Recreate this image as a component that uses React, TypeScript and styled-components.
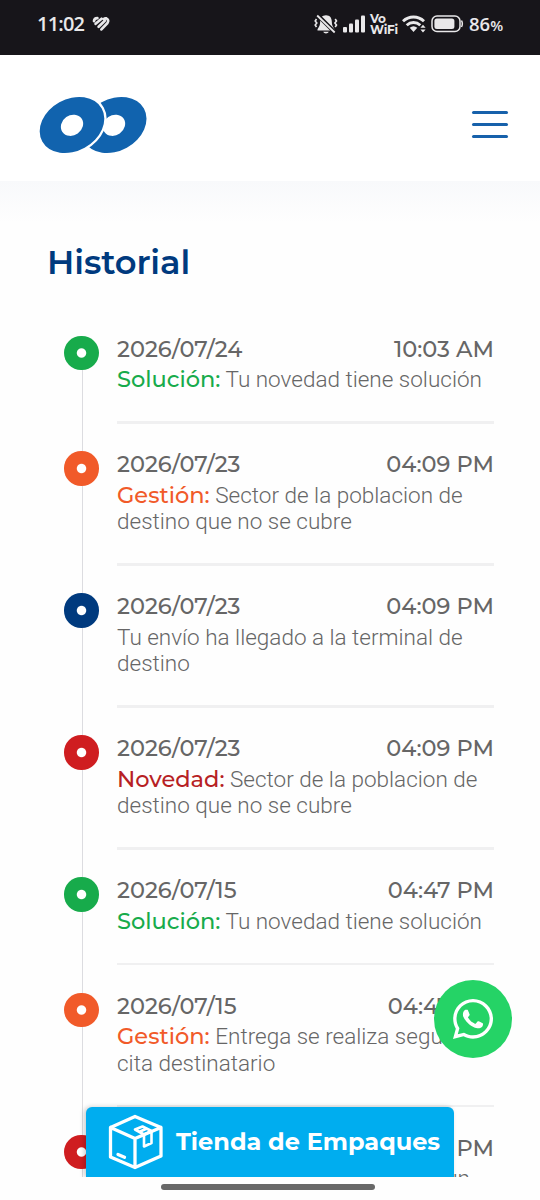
import React from "react";
import styled, { createGlobalStyle } from "styled-components";

const GlobalStyle = createGlobalStyle`
  *, *::before, *::after { box-sizing: border-box; }
  body { margin: 0; background: #fff; }
`;

const heading = `"Montserrat", "Inter", sans-serif`;
const bodyFont = `"Roboto", sans-serif`;
const systemFont = `"Open Sans", sans-serif`;

const Screen = styled.div`
  position: relative;
  width: 540px;
  height: 1200px;
  overflow: hidden;
  display: flex;
  flex-direction: column;
  background: #fefefe;
`;

const StatusBar = styled.div`
  flex: none;
  height: 55px;
  padding: 0 36px 7px 37px;
  display: flex;
  align-items: center;
  justify-content: space-between;
  background: #17151a;
  color: #e9e8ea;
  font-family: ${systemFont};
`;

const StatusGroup = styled.div<{ $gap: number }>`
  display: flex;
  align-items: center;
  gap: ${(p) => p.$gap}px;
`;

const Clock = styled.span`
  width: 49px;
  font-size: 20px;
  font-weight: 600;
  line-height: 24px;
  letter-spacing: -0.8px;
  white-space: nowrap;
`;

const VoWifi = styled.span`
  display: flex;
  flex-direction: column;
  width: 27px;
  font-family: ${heading};
  font-size: 12px;
  font-weight: 700;
  line-height: 11px;
  letter-spacing: -0.2px;
`;

const Percent = styled.span`
  width: 35px;
  font-size: 18.5px;
  font-weight: 600;
  line-height: 24px;
  white-space: nowrap;
  small { font-size: 15px; }
`;

const Header = styled.header`
  flex: none;
  height: 126px;
  padding: 13px 32px 0 38px;
  display: flex;
  align-items: center;
  justify-content: space-between;
  background: #fff;
`;

const MenuButton = styled.button`
  display: flex;
  flex-direction: column;
  gap: 9px;
  width: 36px;
  padding: 0;
  margin-bottom: 1px;
  border: 0;
  background: none;
`;

const MenuBar = styled.span`
  height: 3px;
  border-radius: 2px;
  background: #1761ab;
`;

const Main = styled.main`
  flex: none;
  height: 996px;
  overflow: hidden;
  padding: 57px 46px 0 47px;
  background: linear-gradient(#f8f9fb 0, #fefefe 42px);
`;

const Title = styled.h1`
  margin: 0;
  height: 48px;
  font: 600 33.75px/48px ${heading};
  letter-spacing: -0.1px;
  color: #003a7e;
`;

const Timeline = styled.ol`
  list-style: none;
  margin: 49.8px 0 0;
  padding: 0 0 0 17px;
`;

const Entry = styled.li`
  display: grid;
  grid-template-columns: 35px 1fr;
  column-gap: 18px;
`;

const Rail = styled.div`
  display: flex;
  flex-direction: column;
  align-items: center;
`;

const Marker = styled.span<{ $color: string }>`
  flex: none;
  width: 34.4px;
  height: 34.4px;
  border-radius: 50%;
  background: radial-gradient(circle, #fff 4.2px, ${(p) => p.$color} 5.2px);
`;

const Line = styled.span`
  flex: 1;
  width: 1px;
  margin-left: 1px;
  background: #dcdce0;
`;

const Content = styled.div`
  padding-bottom: 27.5px;
`;

const Stamp = styled.div`
  display: flex;
  justify-content: space-between;
  height: 30.5px;
  font: 500 22.5px/27px ${heading};
  color: #666;
`;

const Description = styled.p`
  margin: 0;
  font: 300 22.5px/26.5px ${bodyFont};
  color: #666;
  white-space: nowrap;
`;

const Label = styled.strong<{ $color: string }>`
  font: 500 22.5px/0 ${heading};
  color: ${(p) => p.$color};
`;

const Divider = styled.hr`
  height: 2.5px;
  margin: 28.5px 0 0;
  border: 0;
  background: #f0f0f1;
`;

const GestureBar = styled.div`
  flex: none;
  height: 23px;
  padding: 7px 4px 0 0;
  display: flex;
  justify-content: center;
  background: #fefefe;
`;

const GesturePill = styled.span`
  width: 214px;
  height: 5.5px;
  border-radius: 3px;
  background: #686868;
`;

const ChatButton = styled.button`
  position: absolute;
  left: 434px;
  top: 980px;
  width: 78px;
  height: 78px;
  padding: 0;
  border: 0;
  border-radius: 50%;
  display: grid;
  place-items: center;
  background: #25d366;
`;

const StoreButton = styled.button`
  position: absolute;
  left: 86px;
  top: 1107px;
  width: 367.5px;
  height: 70px;
  padding: 0 0 0 22px;
  border: 0;
  border-radius: 6px 6px 0 0;
  display: flex;
  align-items: center;
  gap: 12px;
  background: #00adef;
  box-shadow: -2px 0 5px rgba(0, 0, 0, 0.2);
  clip-path: inset(-8px -8px 0 -8px);
  color: #fff;
  font: 700 24px/28px ${heading};
  white-space: nowrap;
`;

const colors = {
  green: "#17ab4b",
  orange: "#f15a29",
  blue: "#003a7e",
  red: "#cf1d20",
};

type Item = { day: string; hour: string; color: string; label?: string; labelColor?: string; lines: string[] };

const items: Item[] = [
  { day: "2026/07/24", hour: "10:03 AM", color: colors.green, label: "Solución:", lines: ["Tu novedad tiene solución"] },
  { day: "2026/07/23", hour: "04:09 PM", color: colors.orange, label: "Gestión:", lines: ["Sector de la poblacion de", "destino que no se cubre"] },
  { day: "2026/07/23", hour: "04:09 PM", color: colors.blue, lines: ["Tu envío ha llegado a la terminal de", "destino"] },
  { day: "2026/07/23", hour: "04:09 PM", color: colors.red, label: "Novedad:", labelColor: "#b71f24", lines: ["Sector de la poblacion de", "destino que no se cubre"] },
  { day: "2026/07/15", hour: "04:47 PM", color: colors.green, label: "Solución:", lines: ["Tu novedad tiene solución"] },
  { day: "2026/07/15", hour: "04:47 PM", color: colors.orange, label: "Gestión:", lines: ["Entrega se realiza segun", "cita destinatario"] },
  { day: "2026/07/15", hour: "04:47 PM", color: colors.red, label: "Novedad:", labelColor: "#b71f24", lines: ["Entrega se realiza segun"] },
];

const HeartIcon = () => (
  <svg width="18" height="16" viewBox="0 0 18 16" fill="none" stroke="#e9e8ea" strokeWidth="2.700" strokeLinecap="round">
    <path d="M2 5.200Q2.200 2.200 5.400 2.200M3.600 7.800 9.600 2.800M6.600 10.800l6.200-6M9.400 13.400l6-6.300q2-3.200-1.100-4.700-1.400-.3-2.600.6" />
  </svg>
);

const MuteIcon = () => (
  <svg width="24" height="21" viewBox="0 0 24 21" fill="#e9e8ea">
    <path d="M12 1.2c4 0 5.800 2.800 5.800 6.400 0 4 1.200 5.400 2.700 7.600v1.300h-17v-1.300c1.500-2.200 2.700-3.600 2.700-7.600 0-3.600 1.800-6.400 5.800-6.400zM9.300 17.800h5.400c-.6 2.200-4.800 2.200-5.400 0z" />
    <path d="M3.500 1 21 18.500" stroke="#17151a" strokeWidth="4" />
    <path d="M3.200 1.500 20.700 18.500" stroke="#e9e8ea" strokeWidth="1.800" />
    <path d="m2.500 5-1.300 2 1.600 2-1.600 2 1.300 2M21.200 5l1.300 2-1.600 2 1.600 2-1.300 2" fill="none" stroke="#e9e8ea" strokeWidth="1.600" />
  </svg>
);

const SignalIcon = () => (
  <svg width="22" height="18" viewBox="0 0 22 18" fill="#e9e8ea">
    <rect x="0" y="12" width="4" height="5.500" rx="1" />
    <rect x="6" y="8.500" width="4" height="9" rx="1" />
    <rect x="12" y="4.500" width="4" height="13" rx="1" />
    <rect x="18" y="0.500" width="4" height="17" rx="1" />
  </svg>
);

const WifiIcon = () => (
  <svg width="24" height="18" viewBox="0 0 24 18" fill="none" stroke="#e9e8ea" strokeWidth="2.900">
    <path d="M1 6.200C7 .6 16 .6 22 6.200M4.700 10.200c4-3.700 9.600-3.700 13.600 0" />
    <path d="M7.700 12.700q3.800-3 7.600 0L11.500 17z" fill="#e9e8ea" stroke="none" />
    <path d="m21 9.800 2.600 3h-5.200zM21 17.600l2.600-3h-5.200z" fill="#e9e8ea" stroke="none" />
  </svg>
);

const BatteryIcon = () => (
  <svg width="33" height="18" viewBox="0 0 33 18">
    <rect x="1" y="1" width="28" height="15.500" rx="5" fill="none" stroke="#e9e8ea" strokeWidth="1.500" />
    <rect x="3.400" y="3.400" width="20" height="10.700" rx="2.500" fill="#e9e8ea" />
    <path d="M30.500 5.500q1.700 3.200 0 6.500" stroke="#e9e8ea" strokeWidth="1.500" fill="none" />
  </svg>
);

const Logo = () => (
  <svg width="110" height="60" viewBox="38 95 110 60">
    <g fill="#1163ae">
      <ellipse cx="114.200" cy="125" rx="34" ry="26" transform="rotate(-29 114.200 125)" />
      <ellipse cx="114" cy="125.300" rx="11.700" ry="10" fill="#fff" transform="rotate(-35 114 125.300)" />
      <ellipse cx="72" cy="125" rx="34" ry="26" transform="rotate(-29 72 125)" stroke="#fff" strokeWidth="4.600" paintOrder="stroke" />
      <ellipse cx="72" cy="125.300" rx="11.700" ry="10" fill="#fff" transform="rotate(-35 72 125.300)" />
    </g>
  </svg>
);

const WhatsAppIcon = () => (
  <svg width="40" height="40" viewBox="0 32 448 448" fill="#fff">
    <path d="M380.900 97.100C339 55.100 283.200 32 223.900 32c-122.400 0-222 99.600-222 222 0 39.100 10.200 77.300 29.600 111L0 480l117.700-30.900c32.400 17.700 68.900 27 106.100 27h.1c122.300 0 224.100-99.600 224.100-222 0-59.300-25.200-115-67.100-157zm-157 341.600c-33.200 0-65.700-8.900-94-25.700l-6.700-4-69.800 18.300L72 359.200l-4.400-7c-18.500-29.400-28.200-63.300-28.200-98.200 0-101.700 82.800-184.500 184.600-184.500 49.300 0 95.600 19.200 130.400 54.100 34.800 34.900 56.200 81.200 56.100 130.500 0 101.800-84.900 184.600-186.600 184.600zm101.200-138.200c-5.500-2.800-32.800-16.200-37.900-18-5.100-1.900-8.800-2.800-12.500 2.800-3.700 5.600-14.300 18-17.600 21.800-3.200 3.700-6.500 4.200-12 1.400-32.600-16.300-54-29.100-75.500-66-5.700-9.800 5.700-9.100 16.300-30.300 1.800-3.700.9-6.900-.5-9.700-1.400-2.800-12.500-30.100-17.100-41.200-4.500-10.800-9.100-9.300-12.500-9.500-3.200-.2-6.900-.2-10.600-.2-3.700 0-9.700 1.400-14.800 6.900-5.100 5.600-19.400 19-19.400 46.300 0 27.300 19.900 53.700 22.600 57.400 2.800 3.700 39.100 59.700 94.800 83.800 35.200 15.200 49 16.500 66.600 13.900 10.700-1.600 32.800-13.400 37.400-26.400 4.600-13 4.600-24.100 3.200-26.400-1.300-2.500-5-3.900-10.500-6.600z" />
  </svg>
);

const BoxIcon = () => (
  <svg width="56" height="56" viewBox="0 0 56 56" fill="none" stroke="#fff" strokeWidth="3.300" strokeLinejoin="round" strokeLinecap="round">
    <path d="M27 2.500 53 13.500V42L27 53.500 2.500 43V13.500zM2.500 13.500 27 24.500 53 13.500M27 24.500V53.500" />
    <path d="M27 15.500 34.500 12.500 43.500 17V29L36 32.500V20.500zM36 20.500 43.500 17M31.500 17.800 39 14.500" strokeWidth="2.600" />
    <path d="m10 40.500 6.500 2.800" />
  </svg>
);

export default function App() {
  return (
    <>
      <GlobalStyle />
      <Screen>
        <StatusBar>
          <StatusGroup $gap={6}>
            <Clock>11:02</Clock>
            <HeartIcon />
          </StatusGroup>
          <StatusGroup $gap={5}>
            <MuteIcon />
            <SignalIcon />
            <VoWifi>
              <span>Vo</span>
              <span>WiFi</span>
            </VoWifi>
            <WifiIcon />
            <BatteryIcon />
            <Percent>86<small>%</small></Percent>
          </StatusGroup>
        </StatusBar>
        <Header>
          <Logo />
          <MenuButton aria-label="Menú">
            <MenuBar />
            <MenuBar />
            <MenuBar />
          </MenuButton>
        </Header>
        <Main>
          <Title>Historial</Title>
          <Timeline>
            {items.map((item, i) => (
              <Entry key={i}>
                <Rail>
                  <Marker $color={item.color} />
                  <Line />
                </Rail>
                <Content>
                  <Stamp>
                    <span>{item.day}</span>
                    <span>{item.hour}</span>
                  </Stamp>
                  <Description>
                    {item.label && <Label $color={item.labelColor ?? item.color}>{item.label}</Label>}
                    {item.label && " "}
                    {item.lines.map((line, n) => (
                      <React.Fragment key={n}>
                        {n > 0 && <br />}
                        {line}
                      </React.Fragment>
                    ))}
                  </Description>
                  <Divider />
                </Content>
              </Entry>
            ))}
          </Timeline>
        </Main>
        <GestureBar>
          <GesturePill />
        </GestureBar>
        <ChatButton aria-label="WhatsApp">
          <WhatsAppIcon />
        </ChatButton>
        <StoreButton>
          <BoxIcon />
          Tienda de Empaques
        </StoreButton>
      </Screen>
    </>
  );
}
